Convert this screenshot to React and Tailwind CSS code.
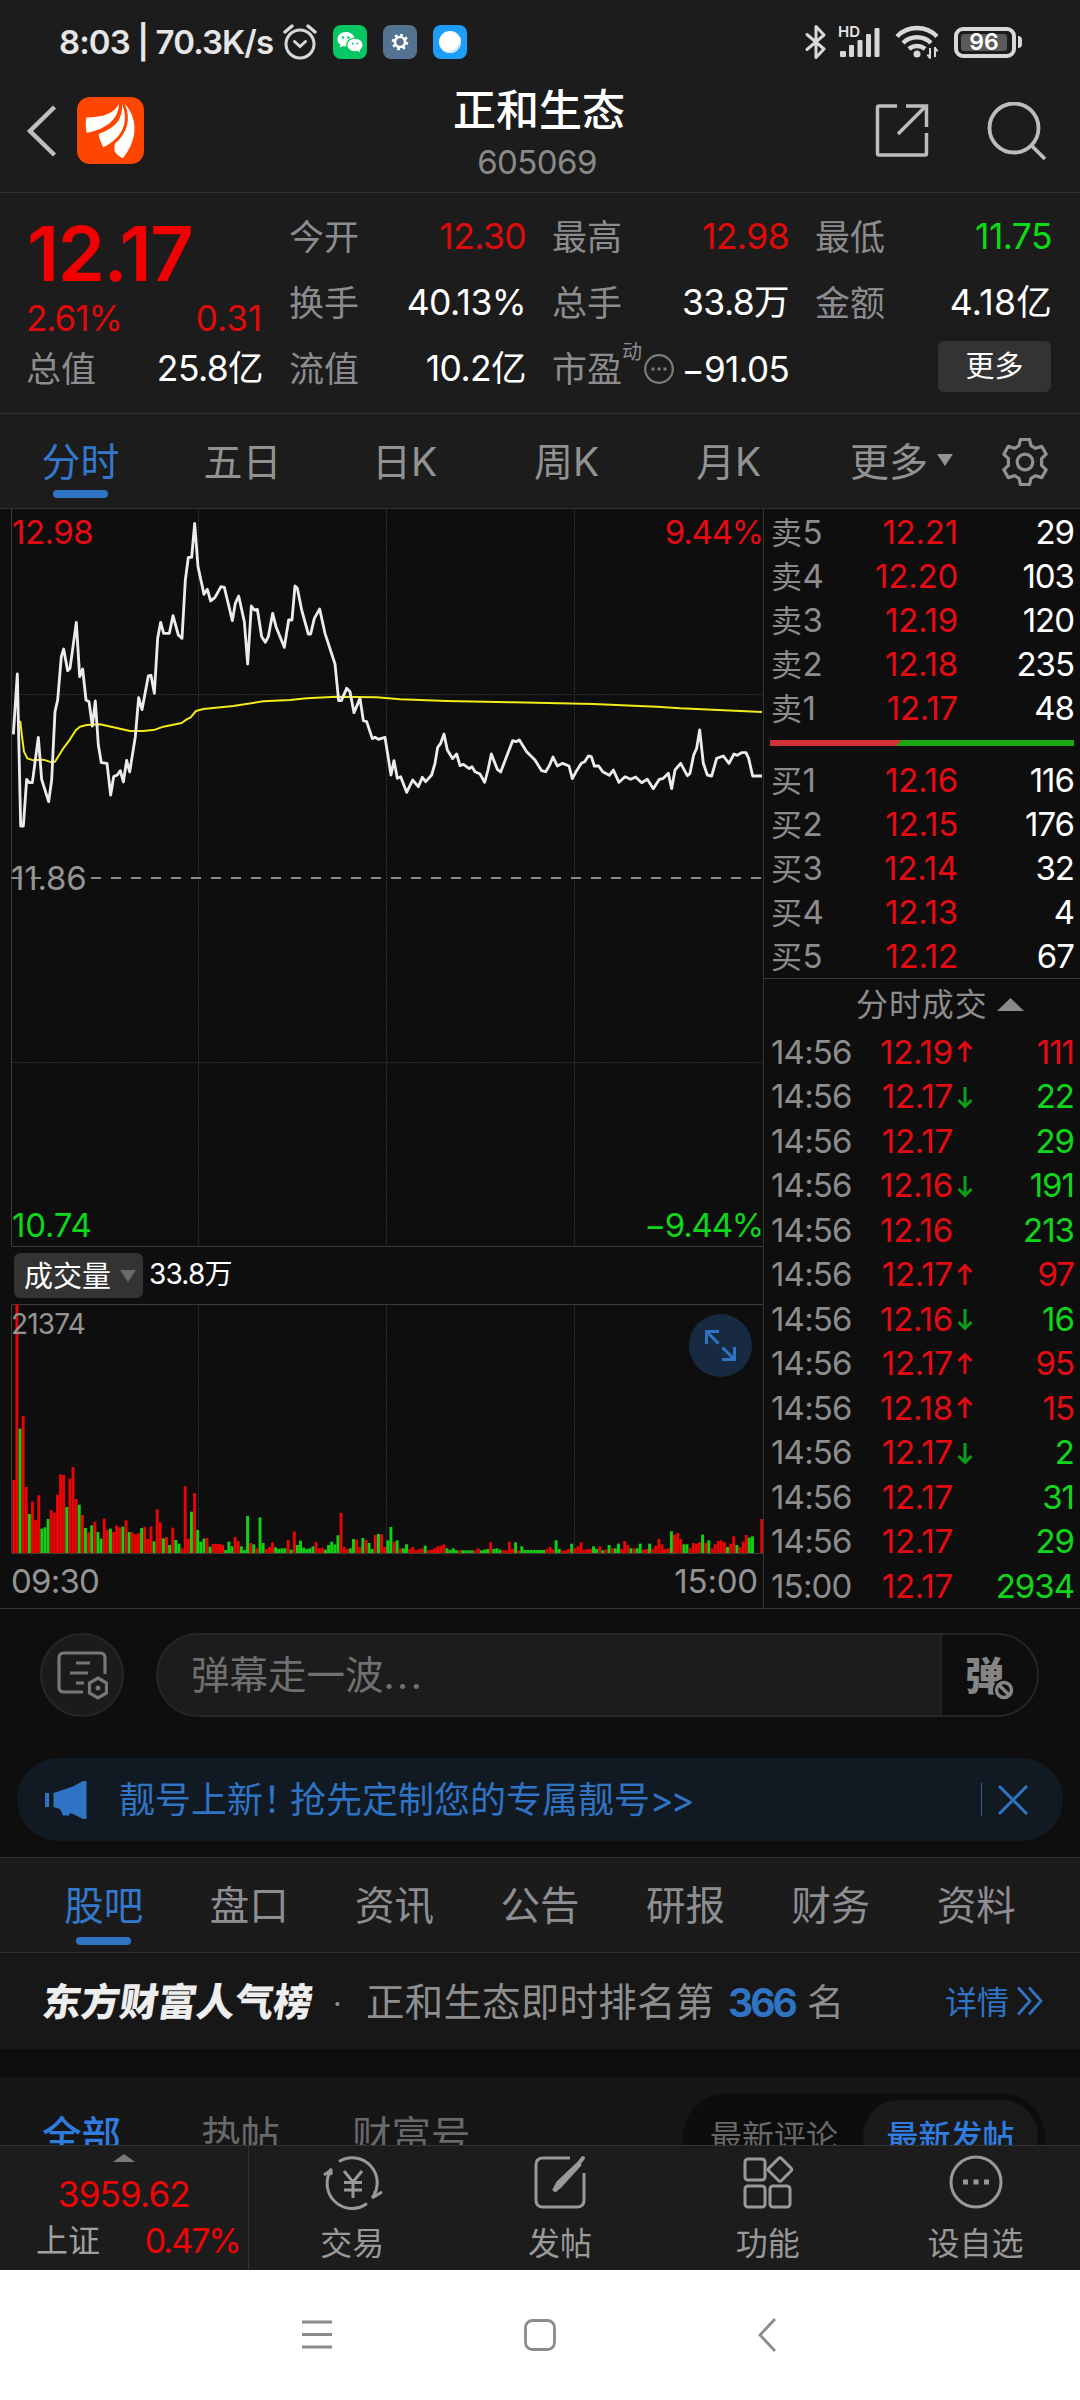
import React from "react";

const PRICE =
  "40,703 52,522 62,978 70,978 80,838 88,848 97,848 115,712 125,838 146,905 155,840 165,635 173,600 184,470 191,447 203,512 210,505 229,367 239,530 248,507 258,600 267,605 277,678 286,603 295,735 304,788 321,790 332,885 341,830 352,825 361,812 370,846 380,781 389,816 406,710 416,593 426,629 445,528 453,526 463,580 473,415 482,367 491,400 508,400 519,347 535,405 546,415 556,240 565,172 575,172 584,70 594,200 612,283 622,268 632,303 645,292 663,260 673,262 697,362 706,310 716,288 733,365 743,492 754,318 763,330 772,328 785,410 796,427 805,410 818,340 828,380 853,442 866,360 876,360 885,258 892,265 905,330 925,402 932,402 943,355 959,327 975,400 1005,492 1016,602 1024,602 1040,565 1050,575 1062,638 1080,595 1090,662 1100,665 1117,716 1125,712 1135,718 1155,712 1173,825 1182,782 1192,835 1202,830 1220,877 1238,840 1255,860 1267,832 1277,845 1295,825 1305,790 1313,742 1322,730 1332,702 1342,750 1358,776 1370,762 1380,797 1390,793 1408,806 1416,800 1425,815 1440,822 1454,847 1464,810 1474,762 1492,808 1502,816 1512,790 1538,722 1548,725 1558,720 1580,755 1605,780 1625,812 1637,815 1649,795 1659,771 1672,798 1688,790 1707,798 1717,836 1730,812 1744,790 1754,785 1765,768 1774,770 1783,798 1796,798 1808,815 1828,826 1840,810 1857,847 1875,830 1892,838 1907,831 1925,848 1942,838 1960,866 1978,838 1990,835 2005,820 2015,866 2025,810 2042,790 2062,827 2070,820 2081,765 2090,745 2099,690 2110,790 2122,825 2135,828 2150,775 2170,768 2187,790 2202,762 2212,766 2225,758 2238,758 2246,775 2258,828 2286,828";
const AVERAGE =
  "56,665 61,665 66,710 72,755 82,775 100,781 130,779 155,787 165,785 190,745 210,718 228,690 240,680 260,675 300,673 340,682 390,693 430,693 465,689 490,680 545,669 560,658 572,652 588,633 610,627 700,618 790,604 870,600 920,595 1010,590 1130,592 1200,598 1340,603 1540,607 1780,612 1970,620 2040,625 2286,636";
const VOLUME =
  "R219 R746 G373 R411 R198 G117 R154 R99 R173 G73 G77 G102 R129 R121 R175 R236 R234 G138 R223 R258 R162 G145 R114 G75 R62 G83 R94 G63 G43 R103 R69 G73 R63 R83 R77 G79 R98 G63 R62 R56 R59 G75 R78 R42 R80 G35 R131 R92 G44 R48 G24 R76 G39 G28 R14 R200 R43 G124 R180 G69 G34 G43 R45 G19 R27 R27 R27 R24 G9 G34 G20 R48 R35 G20 G9 G111 R30 G26 R14 G107 G30 R12 R18 R32 G17 G12 G14 G14 R39 G10 R64 G24 G37 G16 G12 G14 G20 R33 R14 R16 G10 G24 G34 G26 G53 R120 R18 R12 G14 G42 R40 R18 G45 R40 G30 G12 R54 G57 R56 R18 G38 G78 R33 G38 R14 G14 G26 R12 R18 R9 R12 R14 G22 R8 R10 R14 R20 R22 R26 G14 G9 G14 G8 R8 G8 G8 G8 G8 R8 R14 G8 G10 G12 R32 G12 G14 G10 R8 R8 R34 R12 G32 R8 G20 G9 G9 G9 G9 G9 G9 G9 R12 R18 R10 G38 G12 R8 R8 R12 G28 R14 R20 R32 R10 R12 R12 G20 G12 R20 G8 R10 G24 R14 G14 G28 R12 R36 R24 G14 R14 G14 G28 R10 R12 G28 R12 R22 R42 R26 R12 R14 G65 R55 R60 R42 G26 G26 R14 R30 R28 R32 G55 R30 G38 R14 R26 R36 R38 R32 G18 R28 R50 G24 R18 R34 R54 G46 G50 R0 R0 R102".split(
    " "
  );

const SELL = [["5", "12.21", "29"], ["4", "12.20", "103"], ["3", "12.19", "120"], ["2", "12.18", "235"], ["1", "12.17", "48"]];
const BUY = [["1", "12.16", "116"], ["2", "12.15", "176"], ["3", "12.14", "32"], ["4", "12.13", "4"], ["5", "12.12", "67"]];
const TRADES = [
  ["14:56", "12.19", "up", "111", "r"],
  ["14:56", "12.17", "down", "22", "g"],
  ["14:56", "12.17", "", "29", "g"],
  ["14:56", "12.16", "down", "191", "g"],
  ["14:56", "12.16", "", "213", "g"],
  ["14:56", "12.17", "up", "97", "r"],
  ["14:56", "12.16", "down", "16", "g"],
  ["14:56", "12.17", "up", "95", "r"],
  ["14:56", "12.18", "up", "15", "r"],
  ["14:56", "12.17", "down", "2", "g"],
  ["14:56", "12.17", "", "31", "g"],
  ["14:56", "12.17", "", "29", "g"],
  ["15:00", "12.17", "", "2934", "g"],
];

function StatusBar() {
  return (
    <div className="flex h-[84px] items-center pl-[59px] text-[#e6e6e6]">
      <span className="w-[224px] whitespace-nowrap pt-px text-[33px] font-semibold leading-none tracking-[-0.900px]">8:03 | 70.3K/s</span>
      <svg width="34" height="36" viewBox="0 0 34 36" fill="none" stroke="#d8d8d8" strokeWidth="3" strokeLinecap="round">
        <circle cx="17" cy="20" r="14" />
        <path d="M2 8 9 2M32 8 25 2" strokeWidth="3.4" />
        <path d="m11.500 17.500 5.500 5 5.500-5" />
      </svg>
      <svg className="ml-4" width="34" height="34" viewBox="0 0 34 34">
        <rect width="34" height="34" rx="8" fill="#05c864" />
        <path d="M13 7c-5 0-8.500 3.200-8.500 7.200 0 2.300 1.200 4.200 3 5.500L6.800 22.600l3.300-1.700c1 .3 2 .4 3.200.4A7 7 0 0 1 21.500 13C20.700 9.400 17.300 7 13 7Z" fill="#fff" />
        <path d="M22 13.800c-4.300 0-7.500 2.800-7.500 6.200s3.200 6.200 7.500 6.200c.9 0 1.700-.1 2.500-.4l2.700 1.500-.7-2.400c1.800-1.200 3-2.900 3-4.900 0-3.400-3.200-6.200-7.500-6.200Z" fill="#fff" />
        <circle cx="10" cy="12.500" r="1.200" fill="#05c864" />
        <circle cx="15.500" cy="12.500" r="1.200" fill="#05c864" />
        <circle cx="19.700" cy="18.500" r="1" fill="#05c864" />
        <circle cx="24.300" cy="18.500" r="1" fill="#05c864" />
      </svg>
      <svg className="ml-4" width="34" height="34" viewBox="0 0 34 34">
        <rect width="34" height="34" rx="8" fill="#547391" />
        <circle cx="17" cy="17" r="5" fill="none" stroke="#fff" strokeWidth="2.600" />
        <circle cx="17" cy="17" r="7" fill="none" stroke="#fff" strokeWidth="2.600" strokeDasharray="2.700 2.800" />
      </svg>
      <svg className="ml-4" width="34" height="34" viewBox="0 0 34 34">
        <rect width="34" height="34" rx="8" fill="#1f9dfb" />
        <circle cx="17" cy="17" r="11" fill="#fff" />
        <path d="M27 12c1 8-5 15-15 14.500 3 1.700 8 2 11.500-1C28 22 29 16 27 12Z" fill="#cfe3f5" />
      </svg>
      <svg className="ml-[338px]" width="22" height="36" viewBox="0 0 22 36" fill="none" stroke="#d8d8d8" strokeWidth="3" strokeLinejoin="round" strokeLinecap="round">
        <path d="M2 10.500 19 25 11 33.500V2.500L19 11 2 25.500" />
      </svg>
      <div className="relative ml-3 h-[34px] w-[42px]">
        <span className="absolute -left-px -top-px text-[15px] font-semibold leading-none">HD</span>
        <svg width="42" height="34" viewBox="0 0 42 34" fill="#d8d8d8">
          <rect x="1" y="26" width="6" height="6" rx="1" />
          <rect x="10" y="20" width="5" height="12" rx="1" />
          <rect x="18.500" y="15" width="5" height="17" rx="1" />
          <rect x="27" y="9" width="5" height="23" rx="1" />
          <rect x="35.500" y="3" width="5" height="29" rx="1" />
        </svg>
      </div>
      <svg className="ml-[14px]" width="44" height="36" viewBox="0 0 44 36" fill="none" stroke="#d8d8d8" strokeWidth="4.500">
        <path d="M2 12.500a28 28 0 0 1 40 0" />
        <path d="M8 19a20 20 0 0 1 28 0" />
        <path d="M14 25a12 12 0 0 1 16 0" />
        <circle cx="22" cy="30" r="3.500" fill="#d8d8d8" stroke="none" />
        <path d="M35 24v10M40 23v10" strokeWidth="2" />
        <path d="m32 31 3 4v-4ZM43 27l-3-4v4Z" fill="#d8d8d8" strokeWidth="1" />
      </svg>
      <div className="ml-[15px] flex h-[31px] w-[62px] items-center rounded-[9px] border-4 border-[#d8d8d8] p-[3px]">
        <div className="flex h-full w-[46px] items-center justify-center rounded-[3px] bg-[#5a5a5a] text-[23px] font-semibold leading-none text-white">96</div>
      </div>
      <div className="ml-[2px] h-3 w-1 rounded-r bg-[#d8d8d8]" />
    </div>
  );
}

function Header() {
  return (
    <div className="flex h-[109px] items-start border-b border-[#303030]">
      <svg className="ml-[26px] mt-[21px]" width="32" height="52" viewBox="0 0 32 52" fill="none" stroke="#bfbfbf" strokeWidth="4.500">
        <path d="M28.500 2 4 26 28.500 50" />
      </svg>
      <svg className="ml-[19px] mt-[13px]" width="67" height="67" viewBox="0 0 67 67">
        <rect width="67" height="67" rx="13" fill="#ff4600" />
        <path d="M42 7C36 17 27 20 9.500 20.500c-1.200 4-1 9 .2 15.500C28 32 41 24 42 7Z" fill="#fff" />
        <path d="M45 7C46 23 38 31 21.700 37c.3 4 2 8.500 4.600 13.300C44 42 53 26 45 7Z" fill="#fff" />
        <path d="M48 7c6 15 3 28-10 39.700-.6 3-.8 5-.3 7.800 2 3 5 5.500 8 6.800C60 44 62 23 48 7Z" fill="#fff" />
      </svg>
      <div className="ml-[143px] w-[504px] text-center">
        <div className="pt-1 text-[43px] font-medium leading-[44px] text-white">正和生态</div>
        <div className="mt-[13px] -ml-1 text-[33px] leading-[34px] tracking-[-0.600px] text-[#8a8a8a]">605069</div>
      </div>
      <svg className="ml-[83px] mt-[18px]" width="56" height="56" viewBox="0 0 56 56" fill="none" stroke="#bdbdbd" strokeWidth="3.500">
        <path d="M23 4H5q-1.500 0-1.500 1.500v46Q3.500 53 5 53h46q1.500 0 1.500-1.500V31M32 4h20.500v21M52 4 24 32" />
      </svg>
      <svg className="ml-[56px] mt-[18px]" width="64" height="62" viewBox="0 0 64 62" fill="none" stroke="#bdbdbd" strokeWidth="3.800">
        <circle cx="28" cy="26" r="24.500" />
        <path d="M45.500 43.500 59 57" />
      </svg>
    </div>
  );
}

function Stat({ label, value, tone = "text-white" }) {
  return (
    <div className="flex h-[66px] items-center justify-between">
      <span className="text-[35px] leading-none text-[#8c8c8f]">{label}</span>
      <span className={"-mr-px text-[35.500px] leading-none tracking-[-0.600px] " + tone}>{value}</span>
    </div>
  );
}

function Quote() {
  return (
    <div className="grid h-[221px] grid-cols-4 gap-x-[27px] border-b border-[#303030] pl-[26px] pr-[29px] pt-[11px]">
      <div>
        <div className="flex h-[98px] items-center pl-px text-[76px] font-semibold leading-none tracking-[-1.500px] text-[#f00000]">12.17</div>
        <div className="flex h-8 items-center justify-between text-[35px] leading-none tracking-[-1px] text-[#e00a0a]">
          <span>2.61%</span>
          <span className="tracking-[0px]">0.31</span>
        </div>
        <div className="pt-[2px]">
          <Stat label="总值" value="25.8亿" />
        </div>
      </div>
      <div>
        <Stat label="今开" value="12.30" tone="text-[#e00a0a]" />
        <Stat label="换手" value="40.13%" />
        <Stat label="流值" value="10.2亿" />
      </div>
      <div>
        <Stat label="最高" value="12.98" tone="text-[#e00a0a]" />
        <Stat label="总手" value="33.8万" />
        <div className="flex h-[66px] items-center justify-between">
          <span className="flex items-center text-[35px] leading-none text-[#8c8c8f]">
            市盈
            <span className="mb-[34px] text-[20px] leading-none">动</span>
            <svg className="ml-[1px]" width="32" height="32" viewBox="0 0 32 32" fill="none" stroke="#7c7c7c" strokeWidth="2.200">
              <circle cx="16" cy="16" r="13.800" />
              <path d="M8.500 16h3M14.500 16h3M20.500 16h3" strokeWidth="3" />
            </svg>
          </span>
          <span className="-mr-px text-[35px] leading-none tracking-[-0.700px] text-white">−91.05</span>
        </div>
      </div>
      <div>
        <Stat label="最低" value="11.75" tone="text-[#0cdc14]" />
        <Stat label="金额" value="4.18亿" tone="text-white tracking-[0.300px]" />
        <div className="flex h-[66px] items-center justify-end">
          <div className="mb-[5px] flex h-[51px] w-[113px] items-center justify-center rounded-md bg-[#333] text-[29px] leading-none text-white">更多</div>
        </div>
      </div>
    </div>
  );
}

function PeriodTabs() {
  return (
    <div className="flex h-[95px] border-b border-[#303030] text-[39px] leading-none text-[#929292]">
      <div className="flex w-[161px] flex-col items-center pt-[28px] text-[#3478cc]">
        分时
        <div className="mt-[9px] h-2 w-[55px] rounded-full bg-[#2f74c4]" />
      </div>
      {["五日", "日K", "周K", "月K"].map((t) => (
        <div key={t} className="w-[162px] pl-px pt-[28px] text-center">{t}</div>
      ))}
      <div className="flex w-[163px] pl-[41px] pt-[28px]">
        更多
        <svg className="ml-[9px] mt-[12px]" width="16" height="12" viewBox="0 0 16 12" fill="#929292">
          <path d="M0 0h16L8 12Z" />
        </svg>
      </div>
      <svg className="ml-[28px] mt-[23px]" width="50" height="50" viewBox="0 0 50 50" fill="none" stroke="#929292" strokeWidth="3.200" strokeLinejoin="round">
        <path d="M20.500 2.500h9l1.500 6.200 4.500 2.600 6.200-1.900 4.500 7.800-4.600 4.400v6.800l4.600 4.400-4.500 7.800-6.200-1.900-4.500 2.600-1.500 6.200h-9L19 41.300l-4.500-2.600-6.200 1.900-4.500-7.800 4.600-4.400v-6.800l-4.600-4.400 4.500-7.800 6.200 1.900L19 8.700Z" />
        <circle cx="25" cy="25" r="7.800" />
      </svg>
    </div>
  );
}

function PriceChart() {
  return (
    <div className="relative h-[739px] text-[33px] leading-none tracking-[-1.200px]">
      <svg className="block" width="763" height="739" viewBox="0 508 763 739" fill="none">
        <path d="M198.500 508V1246M386.500 508V1246M574.500 508V1246M12 694.500H763M12 1062.500H763" stroke="#303030" strokeDasharray="2 1" />
        <path d="M11.500 508V1246.500H763" stroke="#3c3c3c" />
        <path d="M11.500 878H22M31 878h10" stroke="#8c8c8c" strokeWidth="2" />
        <path d="M91 878H763" stroke="#8c8c8c" strokeWidth="2" strokeDasharray="10 10" />
        <g transform="translate(0 500) scale(0.33333)" strokeLinejoin="round">
          <polyline points={AVERAGE} stroke="#f2ec18" strokeWidth="6" />
          <polyline points={PRICE} stroke="#ececec" strokeWidth="8.500" />
        </g>
      </svg>
      <span className="absolute left-[12px] top-[8px] tracking-[-0.500px] text-[#e60a12]">12.98</span>
      <span className="absolute right-0 top-[8px] text-[#e60a12]">9.44%</span>
      <span className="absolute left-[11px] top-[354px] tracking-[-0.200px] text-[#949494]">11.86</span>
      <span className="absolute left-[12px] top-[701px] tracking-[-0.200px] text-[#10d61a]">10.74</span>
      <span className="absolute right-0 top-[701px] text-[#10d61a]">−9.44%</span>
    </div>
  );
}

function VolumeChart() {
  return (
    <>
      <div className="flex h-[57px] items-start pl-[14px] pt-[6px]">
        <div className="flex h-[45px] w-[129px] items-center rounded-md bg-[#333] pl-[10px] pt-px text-[29px] leading-none text-white">
          成交量
          <svg className="ml-[9px]" width="16" height="12" viewBox="0 0 16 12" fill="#6a6a6a">
            <path d="M0 0h16L8 12Z" />
          </svg>
        </div>
        <span className="ml-[6px] mt-[7px] text-[28px] leading-none tracking-[-0.800px] text-white">33.8万</span>
      </div>
      <div className="relative h-[250px]">
        <svg className="block" width="763" height="250" viewBox="0 1304 763 250" fill="none">
          <path d="M198.500 1304V1553M386.500 1304V1553M574.500 1304V1553" stroke="#303030" strokeDasharray="2 1" />
          <path d="M763 1304.500H11.500V1553.500H763" stroke="#3c3c3c" />
          <g transform="translate(0 1200) scale(0.33333)">
            {VOLUME.map((v, i) => {
              const h = Number(v.slice(1));
              return <rect key={i} x={37 + 9.35 * i} y={1059 - h} width="8.800" height={h} fill={v[0] === "R" ? "#ea0505" : "#12d012"} />;
            })}
          </g>
        </svg>
        <span className="absolute left-[11px] top-[6px] text-[28px] leading-none tracking-[-0.800px] text-[#949494]">21374</span>
        <div className="absolute left-[689px] top-[10px] flex size-[63px] items-center justify-center rounded-full bg-[#172a42]">
          <svg width="31" height="31" viewBox="0 0 31 31" fill="none" stroke="#2f74c4" strokeWidth="3">
            <path d="M1.500 14V1.500H14M2 2l11.500 11.500M29.500 17v12.500H17M29 29 17.500 17.500" />
          </svg>
        </div>
      </div>
      <div className="flex h-[54px] items-center justify-between pl-[11px] pr-[5px] text-[33px] leading-none tracking-[-0.800px] text-[#949494]">
        <span>09:30</span>
        <span className="tracking-[-0.200px]">15:00</span>
      </div>
    </>
  );
}

function DepthRow({ side, row }) {
  return (
    <div className="flex h-11 items-center">
      <span className="w-[80px] text-[#8c8c8c]"><span className="text-[31px] tracking-[0.500px]">{side}</span>{row[0]}</span>
      <span className="w-[107px] text-right tracking-[-0.200px] text-[#e60a12]">{row[1]}</span>
      <span className="w-[116px] text-right text-white">{row[2]}</span>
    </div>
  );
}

function OrderBook() {
  return (
    <div className="h-[1100px] w-[317px] border-l border-[#333] text-[33px] leading-none tracking-[-1px]">
      <div className="pl-[7px] pt-[2px]">{SELL.map((r) => <DepthRow key={r[0]} side="卖" row={r} />)}</div>
      <div className="ml-[6px] mt-[10px] flex h-[6px] w-[304px] bg-[linear-gradient(135deg,#d03238_93px,#1aa814_93.500px)]" />
      <div className="mt-[12px] border-b border-[#3a3a3a] pl-[7px]">{BUY.map((r) => <DepthRow key={r[0]} side="买" row={r} />)}</div>
      <div className="flex h-[51px] items-center pl-[92px] text-[32px] tracking-[0.900px] text-[#8c8c8c]">
        分时成交
        <svg className="ml-[9px]" width="27" height="13" viewBox="0 0 27 13" fill="#8a8a8a">
          <path d="M13.500 0 27 13H0Z" />
        </svg>
      </div>
      {TRADES.map((t, i) => (
        <div key={i} className="flex h-[44.500px] items-center pl-[7px]">
          <span className="w-[88px] tracking-[-0.800px] text-[#8c8c8c]">{t[0]}</span>
          <span className="w-[94px] text-right tracking-[-0.200px] text-[#e60a12]">{t[1]}</span>
          <svg className="ml-[4px]" width="16" height="24" viewBox="0 0 16 24" fill="none" strokeWidth="3">
            {t[2] === "up" && <path d="M8 22V2M1.500 9 8 2.500 14.500 9" stroke="#e60a12" />}
            {t[2] === "down" && <path d="M8 2v20M1.500 15 8 21.500 14.500 15" stroke="#0f9c18" />}
          </svg>
          <span className={"w-[101px] text-right " + (t[4] === "r" ? "text-[#e60a12]" : "text-[#10d61a]")}>{t[3]}</span>
        </div>
      ))}
    </div>
  );
}

function CommentBar() {
  return (
    <div className="flex h-[150px] items-start border-t border-[#333] pl-[40px] pt-[24px]">
      <div className="flex size-[84px] items-center justify-center rounded-full border-2 border-[#262626] bg-[#1b1b1b]">
        <svg width="52" height="50" viewBox="0 0 52 50" fill="none" stroke="#777" strokeWidth="3.200">
          <path d="M27 42H8q-5 0-5-5V8q0-5 5-5h36q5 0 5 5v16" />
          <path d="M20 13h14M14 23h18M20 33h8" />
          <path d="m42 28 8.500 5v10L42 48l-8.500-5V33Z" />
          <circle cx="42" cy="38" r="2.500" fill="#777" stroke="none" />
        </svg>
      </div>
      <div className="ml-[32px] flex h-[84px] w-[883px] items-center overflow-hidden rounded-full border-2 border-[#262626] bg-[#1c1c1c]">
        <div className="flex-1 pl-[33px] text-[38.500px] leading-none text-[#707070]">弹幕走一波<span className="tracking-[2.500px]">...</span></div>
        <div className="flex h-full w-[96px] items-center border-l border-[#262626] bg-[#0e0e0e] pl-[23px]">
          <span className="text-[39px] font-black leading-none text-[#858585]">弹</span>
          <svg className="-ml-[12px] mt-[30px]" width="24" height="24" viewBox="0 0 24 24" fill="#0e0e0e" stroke="#858585" strokeWidth="3.500">
            <circle cx="12" cy="12" r="11" stroke="none" />
            <circle cx="12" cy="12" r="7.500" />
            <path d="m7 7 10 10" />
          </svg>
        </div>
      </div>
    </div>
  );
}

function Notice() {
  return (
    <div className="mx-[17px] flex h-[83px] items-center rounded-full bg-[#111a22] pl-[28px] text-[#2f74c4]">
      <svg width="42" height="38" viewBox="0 0 42 38" fill="#2f74c4">
        <rect y="12" width="4" height="14" />
        <path d="M8.500 12 28 5.500 38 0h3.500v38H38l-10-5-3-1-1 2.500h-6L15 28l-6.500-2Z" />
      </svg>
      <span className="ml-[32px] w-[862px] whitespace-nowrap text-[36px] leading-none">
        靓号上新<span className="tracking-[-9px]">！</span>抢先定制您的专属靓号<span className="tracking-[-3px]">&gt;&gt;</span>
      </span>
      <div className="h-[33px] w-px bg-[#2a5f9c]" />
      <svg className="ml-[15px]" width="32" height="30" viewBox="0 0 32 30" fill="none" stroke="#2f74c4" strokeWidth="3">
        <path d="m2 1 28 28M30 1 2 29" />
      </svg>
    </div>
  );
}

function SectionTabs() {
  return (
    <div className="mt-[16px] flex h-[96px] border-y border-[#303030] bg-[#1b1b1b] px-[31px] pt-[29px] text-[39.500px] leading-none text-[#8e8e92]">
      {["股吧", "盘口", "资讯", "公告", "研报", "财务", "资料"].map((t, i) =>
        i === 0 ? (
          <div key={t} className="flex flex-1 flex-col items-center text-[#3478cc]">
            {t}
            <div className="mt-[10px] h-2 w-[55px] rounded-full bg-[#2f74c4]" />
          </div>
        ) : (
          <div key={t} className="flex-1 text-center">{t}</div>
        )
      )}
    </div>
  );
}

function PopularityRow() {
  return (
    <div className="flex h-[96px] items-center bg-[#171717] pl-[41px] pt-[3px] text-[38.500px] leading-none text-[#8e8e8e]">
      <span className="w-[292px] -skew-x-[8deg] whitespace-nowrap pl-[2px] text-[38.500px] font-black text-[#eee]">东方财富人气榜</span>
      <span className="w-[33px] text-[30px]">·</span>
      <span className="w-[362px] whitespace-nowrap tracking-[0.200px]">正和生态即时排名第</span>
      <span className="w-[79px] text-[39px] font-bold tracking-[-3px] text-[#2f74c4]">366</span>
      <span className="w-[138px] text-[37px]">名</span>
      <span className="text-[32px] text-[#2f74c4]">详情</span>
      <svg className="ml-[7px] mb-1" width="28" height="30" viewBox="0 0 28 30" fill="none" stroke="#2f74c4" strokeWidth="2.800">
        <path d="m2 1.500 12 13.500L2 28.500M13 1.500 25 15 13 28.500" />
      </svg>
    </div>
  );
}

function FeedTabs() {
  return (
    <div className="mt-[28px] h-[68px] overflow-hidden bg-[#161616] pl-[42px] pr-[35px] pt-[17px]">
      <div className="flex h-[84px] items-center text-[39.500px] leading-none text-[#686868]">
        <span className="w-[159px] pt-[2px] font-medium text-[#2f7be0]">全部</span>
        <span className="w-[151px] pt-[2px]">热帖</span>
        <span className="w-[331px] pt-[2px]">财富号</span>
        <div className="flex h-[84px] w-[362px] items-center rounded-full bg-[#0d0d0d] pl-[27px] pr-[7px] text-[32px]">
          <span className="w-[153px] pt-[2px]">最新评论</span>
          <div className="flex h-[72px] w-[175px] items-center justify-center rounded-full bg-[#1a1a1a] pt-[2px] font-medium text-[#2f7be0]">最新发帖</div>
        </div>
      </div>
    </div>
  );
}

function Action({ label, children }) {
  return (
    <div className="flex w-[208px] flex-col items-center pt-[7px] text-[32px] leading-none text-[#999]">
      <svg width="60" height="58" viewBox="0 0 60 58" fill="none" stroke="#999" strokeWidth="3">
        {children}
      </svg>
      <span className="mt-[17px] -ml-px">{label}</span>
    </div>
  );
}

function BottomBar() {
  return (
    <div className="flex h-[125px] border-t border-[#333] bg-[#1c1c1c]">
      <div className="w-[249px] border-r border-[#333] pt-2 leading-none text-[#f00505]">
        <svg className="ml-[113px]" width="22" height="8" viewBox="0 0 22 8" fill="#7a7a7a">
          <path d="M11 0 22 8H0Z" />
        </svg>
        <div className="mt-[15px] text-center text-[35px] tracking-[-0.800px]">3959.62</div>
        <div className="mt-[12px] flex items-center justify-between pl-[36px] pr-[8px]">
          <span className="text-[32px] text-[#a0a0a0]">上证</span>
          <span className="text-[34px] tracking-[-2px]">0.47%</span>
        </div>
      </div>
      <Action label="交易">
        <path d="M16 8.500A25 25 0 0 1 49 45M44 50.500A25 25 0 0 1 8 17M1 22l5-3.500L9 16M49 45l5-3 5-3M8 16v6M52 38v6" />
        <path d="m21 18 9 11 9-11M30 29v16M21 29.500h18M21 37h18" />
      </Action>
      <Action label="发帖">
        <path d="M40 5H13q-7 0-7 7v35q0 7 7 7h34q7 0 7-7V20" />
        <path d="m49 10 4-5M24 38l4-8 20-19 1 1-19 21Z" strokeWidth="4" strokeLinecap="round" />
      </Action>
      <Action label="功能">
        <rect x="7" y="6" width="20" height="21" rx="3" />
        <rect x="7" y="33" width="20" height="21" rx="3" />
        <rect x="32" y="33" width="20" height="21" rx="3" />
        <path d="M40.500 5.500q1.500-1.500 3 0l9.500 9.500q1.500 1.500 0 3l-9.500 9.500q-1.500 1.500-3 0L31 18q-1.500-1.500 0-3Z" />
      </Action>
      <Action label="设自选">
        <circle cx="30" cy="29" r="25" />
        <path d="M17 29h5M27.500 29h5M38 29h5" strokeWidth="5" />
      </Action>
    </div>
  );
}

function SystemNav() {
  return (
    <div className="flex h-[130px] items-start bg-white pt-[47px]">
      <svg className="ml-[300px]" width="34" height="36" viewBox="0 0 34 36" stroke="#8c8c8c" strokeWidth="2.800">
        <path d="M2 5h30M2 17.500h30M2 30h30" />
      </svg>
      <svg className="ml-[189px]" width="34" height="36" viewBox="0 0 34 36" fill="none" stroke="#8c8c8c" strokeWidth="2.800">
        <rect x="2.500" y="3.500" width="29" height="29" rx="7" />
      </svg>
      <svg className="ml-[200px]" width="20" height="36" viewBox="0 0 20 36" fill="none" stroke="#8c8c8c" strokeWidth="2.800">
        <path d="M18 2 3 18l15 16" />
      </svg>
    </div>
  );
}

export default function App() {
  return (
    <div className="h-[2400px] w-[1080px] overflow-hidden bg-[#0e0e0e] font-[Inter,'Noto_Sans_CJK_SC',sans-serif]">
      <div className="bg-[#1c1c1c]">
        <StatusBar />
        <Header />
        <Quote />
        <PeriodTabs />
      </div>
      <div className="-mt-px flex h-[1100px]">
        <div className="w-[763px]">
          <PriceChart />
          <VolumeChart />
        </div>
        <OrderBook />
      </div>
      <CommentBar />
      <Notice />
      <SectionTabs />
      <PopularityRow />
      <FeedTabs />
      <BottomBar />
      <SystemNav />
    </div>
  );
}
